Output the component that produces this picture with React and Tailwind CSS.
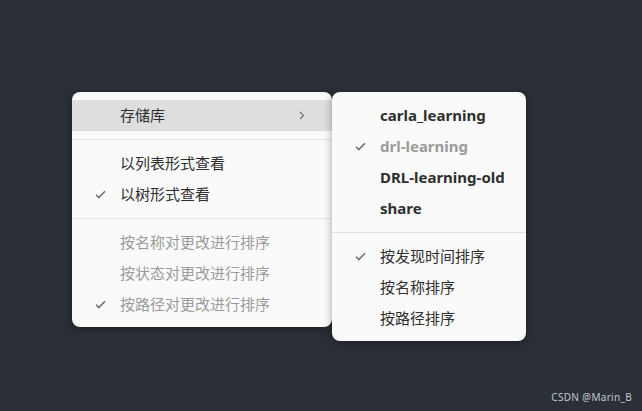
import React from "react";

const font = { fontFamily: '"Noto Sans", "Noto Sans CJK SC", sans-serif' };

function Check() {
  return (
    <svg width="11" height="9" viewBox="0 0 11 9" fill="none">
      <path d="M1 4.8 L3.8 7.6 L10 1.2" stroke="#6f6f6f" strokeWidth="1.5" />
    </svg>
  );
}

function Chevron() {
  return (
    <svg width="6" height="9" viewBox="0 0 6 9" fill="none">
      <path d="M1 1 L4.5 4.5 L1 8" stroke="#707070" strokeWidth="1.2" />
    </svg>
  );
}

function Row({ label, checked, disabled, bold, active, sub }) {
  return (
    <div
      className={`flex items-center h-[31px] pl-[23px] pr-[27px] ${active ? "bg-[#dedede]" : ""}`}
    >
      <div className="w-[25px] shrink-0 flex items-center">{checked && <Check />}</div>
      <span
        className={`flex-1 whitespace-nowrap text-[15px] leading-none ${bold ? "font-bold" : ""} ${
          disabled ? "text-[#9b9b9b]" : "text-[#2f2f2f]"
        }`}
      >
        {label}
      </span>
      {sub && <Chevron />}
    </div>
  );
}

function Sep() {
  return <div className="my-[8px] h-px bg-[#e2e2e2]" />;
}

export default function App() {
  return (
    <div className="relative h-[411px] w-[642px] bg-[#2b2f37] overflow-hidden" style={font}>
      <div className="flex items-start pt-[92px] pl-[72px]">
        <div className="w-[260px] bg-[#fafafa] rounded-[8px] pt-[8px] pb-[7px] shadow-[0_2px_8px_rgba(0,0,0,0.35)]">
          <Row label="存储库" active sub />
          <Sep />
          <Row label="以列表形式查看" />
          <Row label="以树形式查看" checked />
          <Sep />
          <Row label="按名称对更改进行排序" disabled />
          <Row label="按状态对更改进行排序" disabled />
          <Row label="按路径对更改进行排序" disabled checked />
        </div>
        <div className="relative z-10 w-[194px] bg-[#fafafa] rounded-[8px] pt-[8px] pb-[7px] shadow-[0_2px_8px_rgba(0,0,0,0.35)]">
          <Row label="carla_learning" bold />
          <Row label="drl-learning" bold disabled checked />
          <Row label="DRL-learning-old" bold />
          <Row label="share" bold />
          <Sep />
          <Row label="按发现时间排序" checked />
          <Row label="按名称排序" />
          <Row label="按路径排序" />
        </div>
      </div>
      <div className="absolute right-[10px] bottom-[6px] text-[10px] text-[#c4c7cc] tracking-[0.3px]">
        CSDN @Marin_B
      </div>
    </div>
  );
}
